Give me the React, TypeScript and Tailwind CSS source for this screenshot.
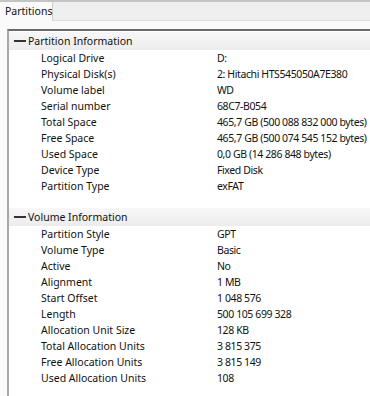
const partition: [string, string][] = [
  ["Logical Drive", "D:"],
  ["Physical Disk(s)", "2: Hitachi HTS545050A7E380"],
  ["Volume label", "WD"],
  ["Serial number", "68C7-B054"],
  ["Total Space", "465,7 GB (500 088 832 000 bytes)"],
  ["Free Space", "465,7 GB (500 074 545 152 bytes)"],
  ["Used Space", "0,0 GB (14 286 848 bytes)"],
  ["Device Type", "Fixed Disk"],
  ["Partition Type", "exFAT"],
];

const volume: [string, string][] = [
  ["Partition Style", "GPT"],
  ["Volume Type", "Basic"],
  ["Active", "No"],
  ["Alignment", "1 MB"],
  ["Start Offset", "1 048 576"],
  ["Length", "500 105 699 328"],
  ["Allocation Unit Size", "128 KB"],
  ["Total Allocation Units", "3 815 375"],
  ["Free Allocation Units", "3 815 149"],
  ["Used Allocation Units", "108"],
];

const Group = ({ title, rows }: { title: string; rows: [string, string][] }) => (
  <div>
    <div className="flex h-[18px] items-center bg-gradient-to-b from-[#f7f7f7] to-[#ececec]">
      <span className="ml-[5px] mr-[2px] h-[2px] w-[12px] bg-[#333]" />
      <span>{title}</span>
    </div>
    {rows.map(([k, v]) => (
      <div key={k} className="flex h-[16px] items-center">
        <span className="w-[208px] shrink-0 pl-[32px]">{k}</span>
        <span className="whitespace-nowrap tracking-[-0.4px]">{v}</span>
      </div>
    ))}
  </div>
);

export default function App() {
  return (
    <div
      className="h-[396px] w-[370px] overflow-hidden bg-[#fafafa] text-[10.5px] leading-none text-[#111]"
      style={{ fontFamily: '"Noto Sans", sans-serif' }}
    >
      <div className="flex h-[21px] border-t-2 border-[#c4c4c4] bg-[#efefef]">
        <div className="flex w-[53px] items-center border-r border-[#d0d0d0] bg-[#fafafa] pl-[5px]">
          Partitions
        </div>
        <div className="flex-1 border-b border-[#dcdcdc]" />
      </div>
      <div className="pl-[7px] pt-[8px]">
        <div className="h-[370px] border-l-2 border-t-2 border-l-[#a8a8a8] border-t-[#6a6a6a] bg-white pt-[1px]">
          <Group title="Partition Information" rows={partition} />
          <div className="h-[14px]" />
          <Group title="Volume Information" rows={volume} />
        </div>
      </div>
    </div>
  );
}
